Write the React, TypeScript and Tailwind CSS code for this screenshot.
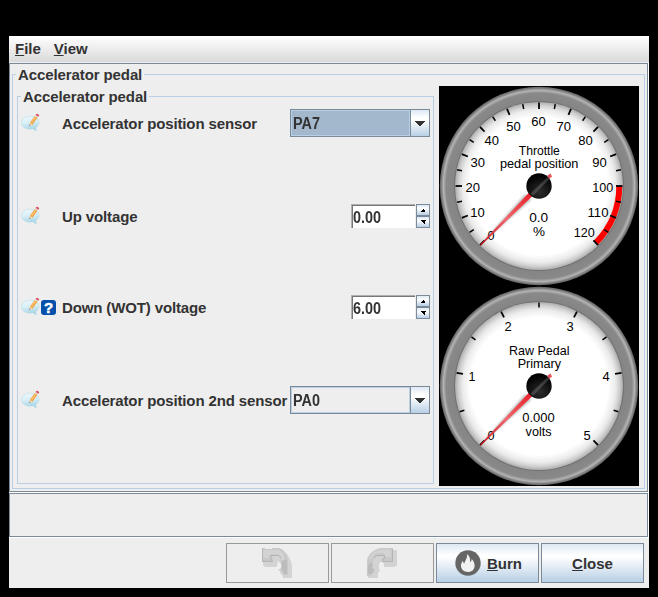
import React from "react";

type Label = { t: string; x: number; y: number; w: number };

const SANS = '"Liberation Sans", Arial, sans-serif';

function polar(deg: number, r: number): [number, number] {
  const a = (deg * Math.PI) / 180;
  return [100 + r * Math.cos(a), 100 - r * Math.sin(a)];
}

function Gauge({
  id,
  steps,
  band,
  labels,
}: {
  id: string;
  steps: number;
  band?: boolean;
  labels: Label[];
}) {
  const [ax, ay] = polar(0, 80.3);
  const [bx, by] = polar(-45, 80.3);
  return (
    <svg width="200" height="200" viewBox="0 0 200 200" className="block font-normal">
      <defs>
        <radialGradient id={id + "ring"} gradientUnits="userSpaceOnUse" cx="100" cy="100" r="99.3">
          <stop offset="0.84" stopColor="#5c5c5c" />
          <stop offset="0.86" stopColor="#858585" />
          <stop offset="0.935" stopColor="#898989" />
          <stop offset="0.963" stopColor="#b4b4b4" />
          <stop offset="0.98" stopColor="#858585" />
          <stop offset="1" stopColor="#5e5e5e" />
        </radialGradient>
        <radialGradient id={id + "face"} gradientUnits="userSpaceOnUse" cx="100" cy="100" r="84">
          <stop offset="0.82" stopColor="#ffffff" />
          <stop offset="0.91" stopColor="#ebebeb" />
          <stop offset="0.96" stopColor="#cecece" />
          <stop offset="1" stopColor="#acacac" />
        </radialGradient>
        <radialGradient id={id + "hub"} cx="0.55" cy="0.75" r="0.7">
          <stop offset="0" stopColor="#2c2c2c" />
          <stop offset="1" stopColor="#000000" />
        </radialGradient>
        <linearGradient id={id + "pin"} gradientUnits="userSpaceOnUse" x1="42" y1="158" x2="92" y2="108">
          <stop offset="0" stopColor="#c8141c" />
          <stop offset="0.5" stopColor="#ef6a70" />
          <stop offset="1" stopColor="#e8202a" />
        </linearGradient>
        <filter id={id + "soft"} x="-20%" y="-20%" width="140%" height="140%">
          <feGaussianBlur stdDeviation="1.2" />
        </filter>
      </defs>
      <circle cx="100" cy="100" r="99.2" fill={`url(#${id}ring)`} />
      <circle cx="100" cy="100" r="84" fill={`url(#${id}face)`} />
      {band && (
        <path d={`M${ax} ${ay} A80.3 80.3 0 0 1 ${bx} ${by}`} fill="none" stroke="#ff0000" strokeWidth="6" />
      )}
      {Array.from({ length: steps + 1 }, (_, i) => {
        const deg = 225 - (270 / steps) * i;
        const major = i % 2 === 0;
        const [x1, y1] = polar(deg, 83.5);
        const [x2, y2] = polar(deg, major ? 77 : 78.5);
        return (
          <line key={i} x1={x1} y1={y1} x2={x2} y2={y2} stroke="#000" strokeWidth={major ? 1.8 : 1.5} />
        );
      })}
      {labels.map((l) => (
        <text
          key={l.t + l.x}
          x={l.x - l.w / 2}
          y={l.y}
          fontFamily={SANS}
          fontSize={l.t.length > 4 && l.t !== "0.000" ? 12.4 : 13}
          textLength={l.w}
          lengthAdjust="spacingAndGlyphs"
          fill="#000"
        >
          {l.t}
        </text>
      ))}
      <path d="M42 158 L86 108 L92 114 Z" fill="#777" opacity="0.45" filter={`url(#${id}soft)`} />
      <path d="M41.2 158.6 L90.3 106.2 L93.8 109.7 L42 159.4 Z" fill={`url(#${id}pin)`} />
      <path d="M108 90 L111.5 87.5 L113 90.5 L110 93 Z" fill="#e8303a" opacity="0.85" />
      <circle cx="100" cy="100" r="12.7" fill={`url(#${id}hub)`} />
      <path d="M91.5 107.5 L108.8 90.8 L110.5 93 L94 110 Z" fill="#fff" opacity="0.17" />
    </svg>
  );
}

const THROTTLE: Label[] = [
  { t: "60", x: 99.5, y: 40, w: 14.5 },
  { t: "50", x: 74.5, y: 45, w: 14.5 },
  { t: "70", x: 124.7, y: 45, w: 14.5 },
  { t: "40", x: 52.7, y: 59, w: 14.5 },
  { t: "80", x: 146.5, y: 59, w: 14.5 },
  { t: "30", x: 38.7, y: 81, w: 14.5 },
  { t: "90", x: 160.5, y: 81, w: 14.5 },
  { t: "20", x: 33.7, y: 106, w: 14.5 },
  { t: "100", x: 163.8, y: 106, w: 21 },
  { t: "10", x: 38.6, y: 131, w: 14.5 },
  { t: "110", x: 159, y: 131, w: 21 },
  { t: "0", x: 52, y: 154, w: 7 },
  { t: "120", x: 145.2, y: 151, w: 21 },
  { t: "Throttle", x: 100.3, y: 69, w: 41 },
  { t: "pedal position", x: 100.2, y: 82, w: 78.5 },
  { t: "0.0", x: 99.7, y: 136, w: 19 },
  { t: "%", x: 100, y: 150, w: 12 },
];

const PEDAL: Label[] = [
  { t: "0", x: 52, y: 154, w: 7 },
  { t: "1", x: 33, y: 95, w: 7 },
  { t: "2", x: 69, y: 45, w: 7.2 },
  { t: "3", x: 131, y: 45, w: 7.2 },
  { t: "4", x: 167, y: 95, w: 7.2 },
  { t: "5", x: 148, y: 154, w: 7.2 },
  { t: "Raw Pedal", x: 100.2, y: 69, w: 60.5 },
  { t: "Primary", x: 100.4, y: 82, w: 43.5 },
  { t: "0.000", x: 99.5, y: 136, w: 32.5 },
  { t: "volts", x: 99.6, y: 150, w: 26 },
];

function NoteIcon() {
  return (
    <svg width="19" height="19" viewBox="0 0 19 19" className="block shrink-0 -translate-y-px">
      <defs>
        <linearGradient id="note" x1="0" y1="0" x2="0.2" y2="1">
          <stop offset="0" stopColor="#eef8fc" />
          <stop offset="0.5" stopColor="#daeff8" />
          <stop offset="1" stopColor="#a5d5e6" />
        </linearGradient>
      </defs>
      <path
        d="M9 3C4.4 3 .4 5.8.4 9.6S4.2 16.2 9 16.2c1 0 2-.1 2.800-.4 1.200 1.200 2.500 1.800 4.200 1.600-1-.7-1.400-1.900-1.100-3C17 13 18 11.500 18 9.600 18 5.800 13.600 3 9 3Z"
        fill="url(#note)"
        stroke="#b9dbe6"
        strokeWidth="0.6"
      />
      <path d="M8.3 12.8 9 9.8 13.900 2.900 16.500 4.700 11.500 11.500Z" fill="#f0a040" />
      <path d="M10.2 10.4 15 3.7" stroke="#ffd37c" strokeWidth="1" />
      <path d="M8.3 12.8 9 9.9 11.4 11.6Z" fill="#f3dfbd" />
      <path d="M8.3 12.8 8.5 11.5 9.5 12.2Z" fill="#555" />
      <path d="M13.9 2.9 14.6 1.9 17.2 3.7 16.5 4.7Z" fill="#d5dce2" />
      <path d="M14.6 1.9 15.3 .9Q17.4.4 18.2 2.500L17.2 3.7Z" fill="#e0505c" />
    </svg>
  );
}

function HelpIcon() {
  return (
    <span className="flex h-[15px] w-[15px] items-center justify-center rounded-[3px] bg-[#0650ab] text-[15px] leading-[15px] font-bold text-white [-webkit-text-stroke:0.5px_white]">
      ?
    </span>
  );
}

function Combo({ value, active }: { value: string; active?: boolean }) {
  return (
    <div className="flex h-7 w-[140px] shrink-0 border border-[#7a8a99]">
      <div
        className={
          "flex flex-1 items-center border border-[#b8cfe5] pt-0.5 pl-px " + (active ? "bg-[#a3b8cc]" : "bg-[#eeeeee]")
        }
      >
        <span className="inline-block origin-left scale-x-[0.9] text-base leading-5">{value}</span>
      </div>
      <div className="flex w-[19px] items-center justify-center border-l border-[#7a8a99] bg-[linear-gradient(#dde8f3_0%,#ffffff_30%,#ffffff_38%,#b8cfe5_100%)]">
        <svg width="10" height="5" viewBox="0 0 10 5" shapeRendering="crispEdges">
          <path d="M0 0H10V1H9V2H8V3H7V4H6V5H4V4H3V3H2V2H1V1H0Z" fill="#333" />
        </svg>
      </div>
    </div>
  );
}

function Spinner({ value }: { value: string }) {
  const btn =
    "flex flex-1 items-center justify-center border-[#7a8a99] bg-[linear-gradient(#dde8f3,#ffffff_35%,#b8cfe5)]";
  return (
    <div className="flex h-6 w-[79px] shrink-0">
      <div className="mr-px flex w-16 items-center border-t border-l border-[#b0b0b0] bg-white">
        <div className="flex h-full w-full items-center border-t border-l border-[#777]">
          <span className="inline-block origin-left scale-x-[0.9] pt-px text-base leading-5">{value}</span>
        </div>
      </div>
      <div className="flex w-[14px] flex-col">
        <div className={btn + " border"}>
          <svg width="5" height="3" viewBox="0 0 5 3" shapeRendering="crispEdges">
            <path d="M2 0H3V1H4V3H0V2H1V1H2Z" fill="#000" />
          </svg>
        </div>
        <div className={btn + " border"}>
          <svg width="5" height="4" viewBox="0 0 5 4" shapeRendering="crispEdges">
            <path d="M0 0H5V1H4V2H4V4H3V3H2V2H1V1H0Z" fill="#000" />
          </svg>
        </div>
      </div>
    </div>
  );
}

function Row({ label, help, children }: { label: string; help?: boolean; children: React.ReactNode }) {
  return (
    <div className="flex h-7 items-center">
      <div className="flex w-[41px] shrink-0 items-center gap-px">
        <NoteIcon />
        {help && <HelpIcon />}
      </div>
      <span className="w-[228px] shrink-0 pt-0.5 tracking-[-0.13px] whitespace-nowrap">{label}</span>
      <div className="flex flex-1 justify-end">{children}</div>
    </div>
  );
}

function Title({ children }: { children: React.ReactNode }) {
  return (
    <span className="absolute -top-[9px] left-[3px] bg-[#eeeeee] px-0.5 leading-[17px] tracking-[-0.1px] whitespace-nowrap">
      {children}
    </span>
  );
}

function ArrowIcon({ flip }: { flip?: boolean }) {
  return (
    <svg width="30" height="30" viewBox="0 0 30 30" className="block">
      {flip ? (
        <>
          <path d="M13 2H30V18H28V19H17V16L15 13L12 16V20L13 23L11 25V30H1V16L4 10L9 4Z" fill="#d3d3d3" />
          <path
            d="M10 1Q12 0 15 0H26V14H16L14 11L17 8H11Q7 9 6 13V20L8 22L6 26H4V28H0V14Q0 5 10 1Z"
            fill="#c9c9c9"
          />
          <path d="M9 3L15 1.5H24V9H19L16 5H11Q6 6 4 11L2 12Q3 6 9 3Z" fill="#d3d3d3" />
          <path d="M1 17L5 14V20L7 22L5 26H1Z" fill="#bcbcbc" />
          <path d="M25.5 1V13.5H15L17.5 10V7.5H9.5L7 10" fill="none" stroke="#b4b4b4" strokeWidth="1" />
        </>
      ) : (
        <>
          <path d="M4 2H20L25 6L28 11L30 17V30H21V28L18 25L19 20V16L16 13L15 18L14 19H3L1 17V8Z" fill="#d3d3d3" />
          <path
            d="M0 0H3V1H10V0H17Q21 1 23 4Q26 8 26 13V27H22L20 24L16 22L19 20V13L17 8H10L11 12V14H0Z"
            fill="#c9c9c9"
          />
          <path d="M1 2H16Q20 3 22 8L23 12L20 13Q19 7 15 6H9L7 10H1Z" fill="#d3d3d3" />
          <path d="M20 13L24 11L25 14V26H22L20 22Z" fill="#bcbcbc" />
          <path d="M.6 1V13.3H10.5L8.5 10V7.5H17L19 10" fill="none" stroke="#b4b4b4" strokeWidth="1" />
        </>
      )}
    </svg>
  );
}

const BLUE_BTN =
  "flex h-10 w-[103px] items-center justify-center border border-[#7a8a99] bg-[linear-gradient(#dde8f3_0%,#ffffff_30%,#ffffff_34%,#b8cfe5_100%)]";
const OFF_BTN = "flex h-10 w-[103px] items-center justify-center border border-[#999999] pr-px";

function Hot({ k, rest }: { k: string; rest: string }) {
  return (
    <span className="leading-[17px]">
      <span className="underline decoration-1 underline-offset-1">{k}</span>
      {rest}
    </span>
  );
}

export default function App() {
  return (
    <div className="h-[597px] w-[658px] bg-black pt-9 pl-[9px] font-['Liberation_Sans',Arial,sans-serif] text-[15px] font-bold text-[#333333]">
      <div className="flex h-[552px] w-[640px] flex-col bg-[#eeeeee]">
        <div className="flex h-[27px] shrink-0 items-center gap-[13px] border-b border-[#eeeeee] bg-[linear-gradient(#ffffff,#dadada)] pb-0.5 pl-1.5">
          <Hot k="F" rest="ile" />
          <Hot k="V" rest="iew" />
        </div>

        <div className="h-[430px] shrink-0 border-r border-b border-white">
          <div className="h-full border border-[#7a8a99] pt-[10px] pl-0.5">
            <div className="relative flex h-[415px] w-[633px] border border-[#b8cfe5] pl-1">
              <Title>Accelerator pedal</Title>
              <div className="relative mt-[21px] flex h-[388px] w-[417px] shrink-0 flex-col border border-[#b8cfe5] pt-3 pr-[3px] pl-[3px]">
                <Title>Accelerator pedal</Title>
                <Row label="Accelerator position sensor">
                  <Combo value="PA7" active />
                </Row>
                <div className="h-[65px]" />
                <Row label="Up voltage">
                  <Spinner value="0.00" />
                </Row>
                <div className="h-[63px]" />
                <Row label="Down (WOT) voltage" help>
                  <Spinner value="6.00" />
                </Row>
                <div className="h-[65px]" />
                <Row label="Accelerator position 2nd sensor">
                  <Combo value="PA0" />
                </Row>
              </div>
              <div className="mt-[11px] ml-[5px] h-[400px] w-[200px] shrink-0 bg-black">
                <Gauge id="a" steps={24} band labels={THROTTLE} />
                <Gauge id="b" steps={10} labels={PEDAL} />
              </div>
            </div>
          </div>
        </div>

        <div className="h-[45px] shrink-0 border-r border-b border-white">
          <div className="h-full border border-[#7a8a99]" />
        </div>

        <div className="flex justify-end gap-0.5 pt-[5px] pr-[5px]">
          <div className={OFF_BTN}>
            <ArrowIcon />
          </div>
          <div className={OFF_BTN}>
            <ArrowIcon flip />
          </div>
          <div className={BLUE_BTN + " gap-1.5 pl-0.5"}>
            <svg width="26" height="26" viewBox="0 0 26 26" className="block">
              <circle cx="13" cy="13" r="12.7" fill="#666666" />
              <path
                d="M12 4C14.5 6 15.6 8.5 15 12.2C16.3 11.5 16.7 10.4 16.6 9C18.6 11 19.8 13.4 19.6 16C19.4 19.7 16.7 22 13 22C9 22 6 19.4 6 15.8C6 13.6 6.8 12 8 10.8C8 12 8.4 13 9.3 13.8C9.8 10.4 12.7 8.5 12 4Z"
                fill="#f2f2f2"
              />
            </svg>
            <Hot k="B" rest="urn" />
          </div>
          <div className={BLUE_BTN}>
            <Hot k="C" rest="lose" />
          </div>
        </div>
      </div>
    </div>
  );
}
